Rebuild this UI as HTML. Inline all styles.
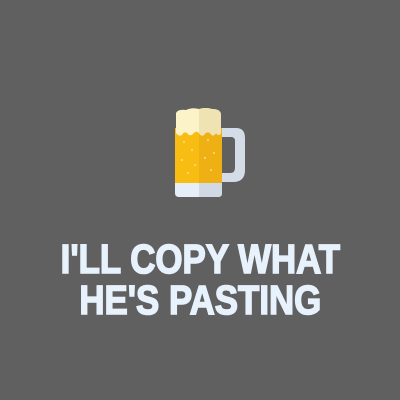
<!DOCTYPE html>
<html><head><style>
html,body{margin:0;padding:0;width:400px;height:400px;background:#606060;overflow:hidden}
.t{position:absolute;left:0;width:400px;text-align:center;font-family:"Liberation Sans",sans-serif;font-weight:bold;color:#e8f2fd;font-size:41px;line-height:41px;-webkit-text-stroke:1.6px #e8f2fd}
.t span{display:inline-block;transform:scaleX(0.85)}
</style></head><body>
<svg width="400" height="400" style="position:absolute;left:0;top:0">
  <path d="M220 128 H236 Q245 128 245 138 V170 Q245 182 233 182 H220 V173 H230 Q235 173 235 168 V141 Q235 137 231 137 H220 Z" fill="#d4dde7"/>
  <path d="M175 176 H222 V193 Q222 197 218 197 H179 Q175 197 175 193 Z" fill="#e6eef8"/>
  <path d="M199 176 H222 V193 Q222 197 218 197 H199 Z" fill="#d0d9e4"/>
  <rect x="175" y="128" width="47" height="55" fill="#f7bd13"/>
  <rect x="199" y="128" width="23" height="55" fill="#eeb012"/>
  <path d="M176 113 Q178 109 186 110 Q192 107 199 109 Q206 107 212 109 Q221 109 221 115 V133 Q219 137 216 133 Q213 138 210 133 Q206 131 204 135 Q201 137 199 133 Q196 130 193 134 Q190 137 187 133 Q184 131 182 135 Q179 137 176 133 Z" fill="#fdf3c8"/>
  <path d="M199 109 Q206 107 212 109 Q221 109 221 115 V133 Q219 137 216 133 Q213 138 210 133 Q206 131 204 135 Q201 137 199 133 Z" fill="#efe2b3"/>
  <g fill="#fbe08a">
    <circle cx="184" cy="142" r="1"/><circle cx="192" cy="150" r="1"/><circle cx="182" cy="160" r="1"/>
    <circle cx="195" cy="165" r="1"/><circle cx="208" cy="140" r="1"/><circle cx="214" cy="153" r="1"/>
    <circle cx="205" cy="158" r="1"/><circle cx="211" cy="170" r="1"/><circle cx="188" cy="173" r="1"/>
  </g>
</svg>
<div class="t" style="top:239px"><span>I'LL COPY WHAT</span></div>
<div class="t" style="top:280px"><span>HE'S PASTING</span></div>
</body></html>
